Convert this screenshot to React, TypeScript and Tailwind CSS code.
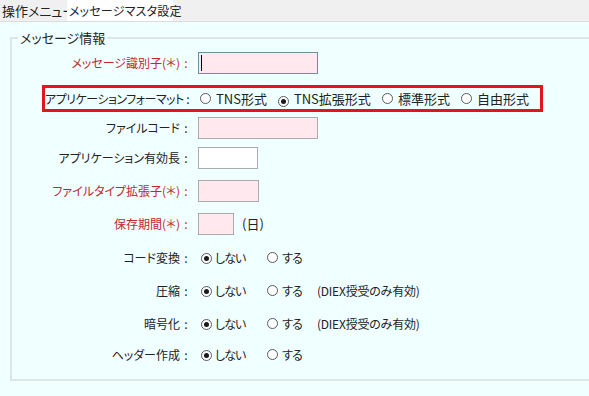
import React from "react";

const font = "[font-family:'Noto_Sans_CJK_JP','Noto_Sans',sans-serif] [font-feature-settings:'palt']";

function Radio({ checked }: { checked?: boolean }) {
  return (
    <span className="inline-flex items-center justify-center w-[11px] h-[11px] rounded-full border border-[#5a5a5a] bg-white shrink-0">
      {checked && <span className="w-[5px] h-[5px] rounded-full bg-[#1a1a1a]" />}
    </span>
  );
}

function Label({ text, red, w = "w-[180px]", tight }: { text: string; red?: boolean; w?: string; tight?: boolean }) {
  return (
    <div className={`${w} shrink-0 whitespace-nowrap flex justify-end ${red ? "text-[#c3262e]" : "text-[#222]"}`}>
      <span className={tight ? "tracking-[-0.5px]" : ""}>{text}</span>
      <span className="w-[12px] text-center [font-feature-settings:normal]">:</span>
    </div>
  );
}

function Box({ w, pink, focus }: { w: string; pink?: boolean; focus?: boolean }) {
  return (
    <div
      className={`${w} h-[22px] border ${focus ? "border-[#6d8ea3]" : "border-[#ababab]"} ${pink ? "bg-[#ffe9ef]" : "bg-white"} flex items-center pl-[2px]`}
    >
      {focus && <span className="w-[1px] h-[16px] bg-black" />}
    </div>
  );
}

function YesNo({ note }: { note?: boolean }) {
  return (
    <div className="flex items-center ml-[9px] whitespace-nowrap text-[#222]">
      <Radio checked />
      <span className="ml-[3px] tracking-[-1px]">しない</span>
      <span className="ml-[22px]"><Radio /></span>
      <span className="ml-[4px] tracking-[-1px]">する</span>
      {note && <span className="ml-[15px] tracking-[-0.2px]">(DIEX授受のみ有効)</span>}
    </div>
  );
}

export default function App() {
  return (
    <div className={`w-[589px] h-[396px] overflow-hidden bg-[#f0ffff] text-[12px] leading-[18px] ${font}`}>
      <div className="h-[22px] bg-[#f0f0f0] border-b border-[#dcdcdc] flex items-stretch whitespace-nowrap">
        <div className="pl-[2px] w-[67px] flex items-center text-[#222] text-[13px]">操作メニュー</div>
        <div className="w-[106px] bg-white flex items-center pl-[2px] text-[#222] text-[12px] tracking-[0.2px]">メッセージマスタ設定</div>
      </div>
      <fieldset className="ml-[10px] mt-[7px] w-[600px] border-2 border-[#dde5e5] pb-[13px]">
        <legend className="ml-[6px] px-[2px] text-[#222] text-[13px]">メッセージ情報</legend>
        <div className="flex items-center h-[22px] mt-[5px]">
          <Label text="メッセージ識別子(＊)" red />
          <div className="ml-[6px]"><Box w="w-[120px]" pink focus /></div>
        </div>
        <div className="flex items-center h-[27px] mt-[11px] ml-[30px] w-[501px] border-[3px] border-[#e1141f] whitespace-nowrap">
          <Label text="アプリケーションフォーマット" w="w-[147px]" tight />
          <div className="flex items-center ml-[8px] text-[13px] text-[#222]">
            <Radio />
            <span className="ml-[5px]">TNS形式</span>
            <span className="ml-[11px]"><Radio checked /></span>
            <span className="ml-[5px]">TNS拡張形式</span>
            <span className="ml-[11px]"><Radio /></span>
            <span className="ml-[5px]">標準形式</span>
            <span className="ml-[11px]"><Radio /></span>
            <span className="ml-[5px]">自由形式</span>
          </div>
        </div>
        <div className="flex items-center h-[22px] mt-[5px]">
          <Label text="ファイルコード" />
          <div className="ml-[6px]"><Box w="w-[120px]" pink /></div>
        </div>
        <div className="flex items-center h-[22px] mt-[8px]">
          <Label text="アプリケーション有効長" />
          <div className="ml-[6px]"><Box w="w-[60px]" /></div>
        </div>
        <div className="flex items-center h-[22px] mt-[11px]">
          <Label text="ファイルタイプ拡張子(＊)" red />
          <div className="ml-[6px]"><Box w="w-[61px]" pink /></div>
        </div>
        <div className="flex items-center h-[22px] mt-[11px]">
          <Label text="保存期間(＊)" red />
          <div className="ml-[6px]"><Box w="w-[36px]" pink /></div>
          <span className="ml-[8px] text-[#222] text-[13px]">(日)</span>
        </div>
        <div className="flex items-center h-[22px] mt-[12px]">
          <Label text="コード変換" />
          <YesNo />
        </div>
        <div className="flex items-center h-[22px] mt-[11px]">
          <Label text="圧縮" />
          <YesNo note />
        </div>
        <div className="flex items-center h-[22px] mt-[11px]">
          <Label text="暗号化" />
          <YesNo note />
        </div>
        <div className="flex items-center h-[22px] mt-[9px]">
          <Label text="ヘッダー作成" />
          <YesNo />
        </div>
      </fieldset>
    </div>
  );
}
